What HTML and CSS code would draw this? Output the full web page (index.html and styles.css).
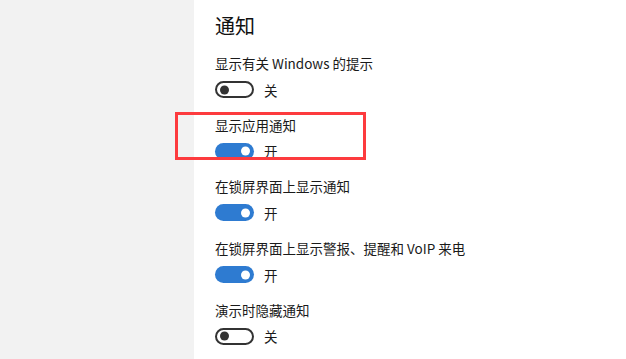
FILE: index.html
```html
<!DOCTYPE html>
<html lang="zh-CN">
<head>
<meta charset="utf-8">
<link rel="stylesheet" href="styles.css">
</head>
<body>
<div class="app">
  <aside class="sidebar"></aside>
  <main class="content">
    <h1 class="title">通知</h1>
    <div class="setting">
      <div class="label">显示有关 Windows 的提示</div>
      <div class="control"><span class="toggle off"><span class="knob"></span></span><span class="state">关</span></div>
    </div>
    <div class="setting highlight">
      <div class="label">显示应用通知</div>
      <div class="control"><span class="toggle on"><span class="knob"></span></span><span class="state">开</span></div>
      <div class="redbox"></div>
    </div>
    <div class="setting">
      <div class="label">在锁屏界面上显示通知</div>
      <div class="control"><span class="toggle on"><span class="knob"></span></span><span class="state">开</span></div>
    </div>
    <div class="setting">
      <div class="label">在锁屏界面上显示警报、提醒和 VoIP 来电</div>
      <div class="control"><span class="toggle on"><span class="knob"></span></span><span class="state">开</span></div>
    </div>
    <div class="setting">
      <div class="label">演示时隐藏通知</div>
      <div class="control"><span class="toggle off"><span class="knob"></span></span><span class="state">关</span></div>
    </div>
  </main>
</div>
</body>
</html>
```
FILE: styles.css
```css
html, body {
  margin: 0;
  padding: 0;
  background: #ffffff;
  font-family: "Noto Sans CJK SC", "Noto Sans", sans-serif;
  color: #1a1a1a;
}
.app {
  display: flex;
  width: 626px;
  height: 359px;
  overflow: hidden;
}
.sidebar {
  width: 194px;
  flex: none;
  background: #f2f2f2;
}
.content {
  flex: 1;
  padding: 11px 0 0 21px;
}
.title {
  margin: 0;
  font-size: 20px;
  font-weight: 400;
  line-height: 30px;
  color: #111;
}
.setting {
  position: relative;
  display: flex;
  flex-direction: column;
  margin-top: 12px;
}
.setting + .setting {
  margin-top: 16.7px;
}
.label {
  font-size: 13.5px;
  line-height: 20px;
  color: #1a1a1a;
}
.control {
  display: flex;
  align-items: center;
  gap: 10px;
  margin-top: 8px;
  height: 17px;
}
.toggle {
  position: relative;
  box-sizing: border-box;
  width: 39px;
  height: 17px;
  border-radius: 9px;
  flex: none;
}
.toggle.off {
  border: 2px solid #333;
  background: #fff;
}
.toggle.on {
  background: #2e7bd1;
}
.knob {
  position: absolute;
  width: 9px;
  height: 9px;
  border-radius: 50%;
  top: 50%;
  transform: translateY(-50%);
}
.toggle.off .knob {
  left: 3px;
  background: #333;
}
.toggle.on .knob {
  right: 4px;
  background: #fff;
}
.state {
  font-size: 13.5px;
  color: #1a1a1a;
}
.redbox {
  position: absolute;
  left: -40px;
  top: -3px;
  width: 191px;
  height: 48px;
  box-sizing: border-box;
  border: 3px solid #fd3b3e;
}
```
